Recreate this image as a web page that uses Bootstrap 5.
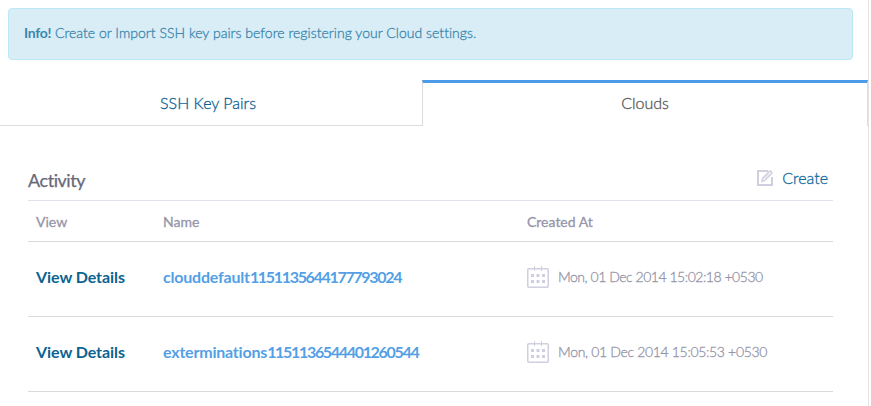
<!DOCTYPE html>
<html lang="en">
<head>
<meta charset="utf-8">
<meta name="viewport" content="width=device-width, initial-scale=1">
<title>Clouds</title>
<link href="https://cdn.jsdelivr.net/npm/bootstrap@5.3.0/dist/css/bootstrap.min.css" rel="stylesheet">
<style>
body{font-family:Lato,"Open Sans",sans-serif;background:#fff;overflow:hidden;font-variant-ligatures:none}
a{text-decoration:none}
.page{width:869px;height:406px;border-right:1px solid #e3e3e5}
.info-box{height:52px;margin:8px 15px 0 8px;padding:0 15px;background:#d9edf7;border:1px solid #bce8f1;border-radius:4px;color:#3a87ad;font-size:14px;line-height:48px;font-weight:300}
.info-box .t{letter-spacing:.03px;-webkit-text-stroke:.3px}
.info-box strong{font-weight:700;letter-spacing:-.3px;-webkit-text-stroke:0}
.split-tabs{margin-top:20px;height:46px;border:0}
.split-tabs .nav-link{height:46px;border-radius:0;padding:0;border:0;border-bottom:1px solid #ddd;color:#0d5f92;font-size:16px;line-height:45px;text-align:center;font-weight:300;-webkit-text-stroke:.3px}
.split-tabs .tab-keys{width:422px;padding-right:6px}
.split-tabs .nav-link.active{width:446px;color:#555;background:#fff;border:1px solid #ddd;border-top:3px solid #4b9be8;border-bottom:0;line-height:39px}
.activity{margin:0 35px 0 28px}
.activity-head{height:75px;border-bottom:1px solid #e1e1ec}
.activity-title{font-size:18px;color:#686878;line-height:20px;margin:0 0 10px;letter-spacing:-.45px;-webkit-text-stroke:.25px}
.create-link{color:#0d6a9c;font-size:16px;line-height:20px;margin:0 5px 12px 0;gap:8px;font-weight:300;-webkit-text-stroke:.3px}
.grid-table{table-layout:fixed;color:#9595a8}
.grid-table>:not(caption)>*>*{padding:0 8px;background:transparent;color:inherit;border-bottom:1px solid #d9dadc;box-shadow:none;vertical-align:middle}
.grid-table thead tr>th{height:40px;padding-top:2px;font-size:14px;line-height:20px;font-weight:400;-webkit-text-stroke:.3px}
.grid-table tbody td{height:75px;font-size:14px;font-weight:300;padding-bottom:4px}
.grid-table .stamp{-webkit-text-stroke:.3px}
.grid-table a{font-size:16px;font-weight:700;letter-spacing:-.06px}
.grid-table .name-link{color:#539fe6;letter-spacing:-.2px}
.view-link{color:#0b6390}
.digits{letter-spacing:-1.320px}
.stamp{gap:9px;letter-spacing:-.47px}
.stamp-wide{letter-spacing:-.33px}
.stamp svg{position:relative;top:1px}
.t{display:inline-block;white-space:nowrap}
</style>
<script src="https://cdn.jsdelivr.net/npm/bootstrap@5.3.0/dist/js/bootstrap.bundle.min.js" defer></script>
</head>
<body>
<main class="page d-flex flex-column">
  <div class="info-box flex-shrink-0" role="alert"><span class="t"><strong>Info!</strong> Create or Import SSH key pairs before registering your Cloud settings.</span></div>
  <nav class="nav split-tabs flex-nowrap flex-shrink-0">
    <a class="nav-link tab-keys" href="#"><span class="t">SSH Key Pairs</span></a>
    <a class="nav-link active" href="#"><span class="t">Clouds</span></a>
  </nav>
  <section class="activity">
    <header class="activity-head d-flex justify-content-between align-items-end">
      <h2 class="activity-title fw-normal"><span class="t">Activity</span></h2>
      <a class="create-link d-flex align-items-center" href="#">
        <svg width="17" height="16" viewBox="0 0 17 16" fill="none" stroke="#cfcfe0"><path d="M11 1H1v14h14V7" stroke-width="2"/><path d="M5 11.300l.8-3.200L12.500 1.400q.8-.7 1.800.200t.2 1.900L7.900 10.400z" stroke-width="1.500"/><path d="M7.500 8.800l5-5" stroke-width=".8"/></svg>
        <span class="t">Create</span>
      </a>
    </header>
    <table class="table grid-table align-middle mb-0">
      <colgroup><col style="width:127px"><col style="width:364px"><col></colgroup>
      <thead><tr><th><span class="t">View</span></th><th><span class="t">Name</span></th><th><span class="t">Created At</span></th></tr></thead>
      <tbody>
        <tr>
          <td><a class="view-link" href="#"><span class="t">View Details</span></a></td>
          <td><a class="name-link" href="#"><span class="t">clouddefault<span class="digits">1151135644177793024</span></span></a></td>
          <td><div class="stamp d-flex align-items-center"><svg width="22" height="23" viewBox="0 0 22 23"><rect x=".75" y="2.750" width="20.500" height="18.500" rx="1" fill="none" stroke="#cfcfe0" stroke-width="1.500"/><path d="M7.500 0v5M14.500 0v5" stroke="#cfcfe0"/><path d="M4 8h3v3H4zM9.500 8h3v3h-3zM15 8h3v3h-3zM4 14h3v3H4zM9.500 14h3v3h-3zM15 14h3v3h-3z" fill="#cfcfe0"/></svg><span class="t">Mon, 01 Dec 2014 15:02:18 +0530</span></div></td>
        </tr>
        <tr>
          <td><a class="view-link" href="#"><span class="t">View Details</span></a></td>
          <td><a class="name-link" href="#"><span class="t">exterminations<span class="digits">1151136544401260544</span></span></a></td>
          <td><div class="stamp stamp-wide d-flex align-items-center"><svg width="22" height="23" viewBox="0 0 22 23"><rect x=".75" y="2.750" width="20.500" height="18.500" rx="1" fill="none" stroke="#cfcfe0" stroke-width="1.500"/><path d="M7.500 0v5M14.500 0v5" stroke="#cfcfe0"/><path d="M4 8h3v3H4zM9.500 8h3v3h-3zM15 8h3v3h-3zM4 14h3v3H4zM9.500 14h3v3h-3zM15 14h3v3h-3z" fill="#cfcfe0"/></svg><span class="t">Mon, 01 Dec 2014 15:05:53 +0530</span></div></td>
        </tr>
      </tbody>
    </table>
  </section>
</main>
</body>
</html>
